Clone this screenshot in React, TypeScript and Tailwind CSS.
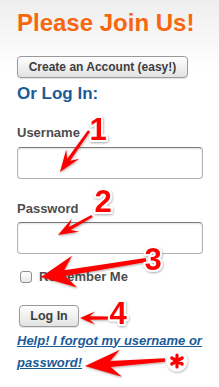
import React from "react";

type P = [number, number];

function arrowPath(t: P, h: P, headLen: number, headW: number, tailW: number, neckW: number): string {
  const dx = h[0] - t[0];
  const dy = h[1] - t[1];
  const len = Math.hypot(dx, dy);
  const ux = dx / len;
  const uy = dy / len;
  const nx = -uy;
  const ny = ux;
  const bx = h[0] - ux * headLen;
  const by = h[1] - uy * headLen;
  const nkx = bx + ux * headLen * 0.25;
  const nky = by + uy * headLen * 0.25;
  const pts: P[] = [
    [t[0] + nx * tailW / 2, t[1] + ny * tailW / 2],
    [nkx + nx * neckW / 2, nky + ny * neckW / 2],
    [bx + nx * headW / 2 - ux * 2, by + ny * headW / 2 - uy * 2],
    [h[0], h[1]],
    [bx - nx * headW / 2 - ux * 2, by - ny * headW / 2 - uy * 2],
    [nkx - nx * neckW / 2, nky - ny * neckW / 2],
    [t[0] - nx * tailW / 2, t[1] - ny * tailW / 2],
  ];
  return "M" + pts.map((p) => p[0].toFixed(1) + " " + p[1].toFixed(1)).join(" L") + " Z";
}

function Num({ x, y, children }: { x: number; y: number; children: React.ReactNode }) {
  return (
    <text
      x={x}
      y={y}
      textAnchor="middle"
      fontFamily="'Liberation Sans', Arial, sans-serif"
      fontWeight={700}
      fontSize={31}
      fill="#ff0000"
      stroke="#ffffff"
      strokeWidth={4}
      strokeLinejoin="round"
      paintOrder="stroke"
      filter="url(#sh)"
    >
      {children}
    </text>
  );
}

function Asterisk({ cx, cy, r }: { cx: number; cy: number; r: number }) {
  const spokes = [0, 60, 120].map((a) => {
    const rad = ((a + 90) * Math.PI) / 180;
    const dx = Math.cos(rad) * r;
    const dy = Math.sin(rad) * r;
    return `M${(cx - dx).toFixed(1)} ${(cy - dy).toFixed(1)} L${(cx + dx).toFixed(1)} ${(cy + dy).toFixed(1)}`;
  });
  return <path d={spokes.join(" ")} stroke="#ff0000" strokeWidth={3.2} strokeLinecap="round" fill="none" />;
}

function Annotations() {
  return (
    <svg
      className="absolute left-0 top-0 pointer-events-none"
      width={219}
      height={387}
      viewBox="0 0 219 387"
    >
      <defs>
        <filter id="sh" x="-30%" y="-30%" width="160%" height="160%">
          <feDropShadow dx="0.5" dy="1" stdDeviation="1" floodColor="#000" floodOpacity="0.35" />
        </filter>
      </defs>
      <g fill="#ff0000" filter="url(#sh)">
        <path d={arrowPath([89, 131], [60, 172], 20, 16, 2.5, 3.5)} />
        <path d={arrowPath([92, 216], [58, 235], 18, 15, 2.5, 3.5)} />
        <path d={arrowPath([146, 260], [41, 277], 32, 32, 4, 6)} />
        <path d={arrowPath([108, 318], [80, 318], 13, 13, 3, 3.5)} />
        <path d={arrowPath([165, 360], [85, 366], 34, 27, 3.5, 6)} />
      </g>
      <Num x={98} y={140}>1</Num>
      <Num x={103} y={212}>2</Num>
      <Num x={153} y={270}>3</Num>
      <Num x={118} y={324}>4</Num>
      <g filter="url(#sh)">
        <circle cx={177} cy={361} r={10.5} fill="#ffffff" />
      </g>
      <Asterisk cx={177} cy={361} r={6} />
    </svg>
  );
}

export default function App() {
  return (
    <div
      className="relative w-[219px] h-[387px] overflow-hidden bg-[linear-gradient(#eeeeee,#ffffff_70px)] pl-[17px] pr-[12px] pt-[9px]"
      style={{ fontFamily: "'Liberation Sans', Arial, sans-serif" }}
    >
      <h1 className="text-[24px] leading-[28px] font-bold text-[#f8660f] whitespace-nowrap">
        Please Join Us!
      </h1>
      <button className="mt-[19px] block w-[171px] h-[22px] rounded-[4px] border border-[#9a9a9a] bg-[linear-gradient(#ffffff,#e2e2e2)] text-[12px] font-bold text-[#3e3e3e] leading-none shadow-[0_1px_1px_rgba(0,0,0,0.12)]">
        Create an Account (easy!)
      </button>
      <h2 className="mt-[6px] text-[17px] leading-[20px] font-bold text-[#1a5b98]">Or Log In:</h2>
      <div className="mt-[21px] text-[13px] leading-[16px] font-bold text-[#4d4d4d]">Username</div>
      <div className="mt-[6px] w-[186px] h-[32px] rounded-[4px] border border-[#b3b3b3] border-t-[#7a7a7a] bg-white shadow-[inset_0_1px_2px_rgba(0,0,0,0.12)]" />
      <div className="mt-[22px] text-[13px] leading-[16px] font-bold text-[#4d4d4d]">Password</div>
      <div className="mt-[5px] w-[186px] h-[32px] rounded-[4px] border border-[#b3b3b3] border-t-[#7a7a7a] bg-white shadow-[inset_0_1px_2px_rgba(0,0,0,0.12)]" />
      <div className="mt-[15px] h-[16px] flex items-center pl-[3px]">
        <div className="w-[12px] h-[12px] rounded-[3px] border border-[#8e8e8e] bg-[linear-gradient(#ffffff,#e8e8e8)]" />
        <span className="ml-[7px] text-[13px] leading-[16px] font-bold text-[#4d4d4d]">Remember Me</span>
      </div>
      <button className="mt-[20px] ml-[2px] block w-[60px] h-[22px] rounded-[4px] border border-[#9a9a9a] bg-[linear-gradient(#ffffff,#e2e2e2)] text-[12.5px] font-bold text-[#3e3e3e] leading-none shadow-[0_1px_1px_rgba(0,0,0,0.12)]">
        Log In
      </button>
      <a
        href="#"
        className="mt-[2.5px] block text-[13px] leading-[22px] font-bold italic underline text-[#1a5b98]"
      >
        Help! I forgot my username or password!
      </a>
      <Annotations />
    </div>
  );
}
